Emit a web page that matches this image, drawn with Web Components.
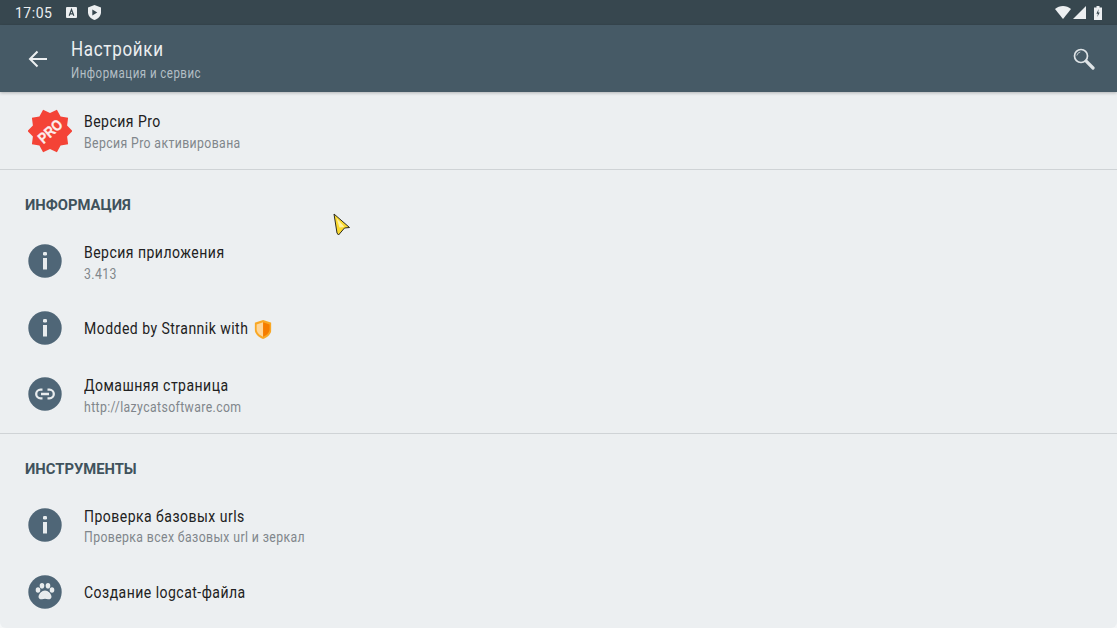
<!DOCTYPE html>
<html>
<head>
<meta charset="utf-8">
<style>
  html, body { margin: 0; height: 100%; background: #f5f7f8; overflow: hidden; }
  body { font-family: Roboto, "Liberation Sans", sans-serif; }
  app-screen { height: 628px; }
</style>
</head>
<body>
<app-screen>
  <status-bar></status-bar>
  <app-toolbar title="Настройки" subtitle="Информация и сервис"></app-toolbar>
  <pref-row label="Версия Pro" sub="Версия Pro активирована" icon="pro" first></pref-row>
  <pref-divider></pref-divider>
  <pref-header>ИНФОРМАЦИЯ</pref-header>
  <pref-row label="Версия приложения" sub="3.413" icon="info"></pref-row>
  <pref-row label="Modded by Strannik with" icon="info" shield></pref-row>
  <pref-row label="Домашняя страница" sub="http://lazycatsoftware.com" icon="link" last></pref-row>
  <pref-divider></pref-divider>
  <pref-header>ИНСТРУМЕНТЫ</pref-header>
  <pref-row label="Проверка базовых urls" sub="Проверка всех базовых url и зеркал" icon="info"></pref-row>
  <pref-row label="Создание logcat-файла" icon="paw"></pref-row>
  <mouse-pointer></mouse-pointer>
</app-screen>

<script>
// scalloped badge behind the PRO text
function badgePoints() {
  const pts = [];
  for (let i = 0; i < 20; i++) {
    const r = i % 2 ? 18 : 22.400;
    const a = (i * 18 - 108) * Math.PI / 180;
    pts.push((22 + r * Math.cos(a)).toFixed(1) + ',' + (22 + r * Math.sin(a)).toFixed(1));
  }
  return pts.join(' ');
}

const ICONS = {
  info: `<circle cx="17" cy="17" r="16.7" fill="#4f6677"/>
    <rect x="15" y="8" width="4" height="3.400" rx="1.200" fill="#e8ecee"/><rect x="15" y="14" width="4" height="11.500" fill="#e8ecee"/>`,
  link: `<circle cx="17" cy="17" r="16.7" fill="#4f6677"/>
    <path d="M14.500 12.700h-2a4.300 4.300 0 0 0 0 8.600h2M19.500 12.700h2a4.300 4.300 0 0 1 0 8.600h-2M13 17h8" fill="none" stroke="#e8ecee" stroke-width="2.300"/>`,
  paw: `<circle cx="17" cy="17" r="16.7" fill="#4f6677"/>
    <g fill="#e8ecee"><ellipse cx="10" cy="15" rx="2.300" ry="2.800"/><ellipse cx="14" cy="10.800" rx="2.300" ry="2.800"/><ellipse cx="20" cy="10.800" rx="2.300" ry="2.800"/><ellipse cx="24" cy="15" rx="2.300" ry="2.800"/>
    <path d="M17 15.500c-3 0-6.500 3.500-6.500 6.300 0 2.300 2.200 2.700 3.500 2.500 1-.2 2-.6 3-.6s2 .4 3 .6c1.300.2 3.500-.2 3.500-2.500 0-2.800-3.500-6.300-6.500-6.300z"/></g>`,
  pro: `<polygon fill="#f44336" points="${badgePoints()}"/>
    <g transform="rotate(-42 22 22) translate(22 27.400) scale(.84 1)"><text text-anchor="middle" font-family="'Liberation Sans', sans-serif" font-weight="700" font-size="15" stroke="#fdeeec" stroke-width=".3" fill="#fdeeec">PRO</text></g>`
};

class AppScreen extends HTMLElement {
  constructor() {
    super();
    this.attachShadow({ mode: 'open' });
    this.shadowRoot.innerHTML = `
      <style>
        :host { display: flex; flex-direction: column; position: relative; overflow: hidden; background: #eceff1; border-radius: 0 0 6px 6px; }
      </style>
      <slot></slot>`;
  }
}

class StatusBar extends HTMLElement {
  constructor() {
    super();
    this.attachShadow({ mode: 'open' });
    this.shadowRoot.innerHTML = `
      <style>
        :host { display: flex; align-items: center; height: 25px; flex: none; padding: 0 15px; background: #37474f; color: #eceff1; font-size: 14px; letter-spacing: .5px; }
        .left { display: flex; align-items: center; }
        .right { margin-left: auto; display: flex; align-items: center; }
        svg { display: block; }
      </style>
      <div class="left">
        <span>17:05</span>
        <svg style="margin-left:14px" width="11" height="11" viewBox="0 0 11 11"><rect width="11" height="11" rx="1" fill="#eceff1"/><path d="M3.200 8.800l2.300-6.300 2.300 6.300M4 6.800h3" stroke="#37474f" stroke-width="1.200" fill="none"/></svg>
        <svg style="margin-left:11px" width="13" height="15" viewBox="0 0 13 15"><path d="M6.500 0L13 2.400v4.800c0 3.500-2.700 6.500-6.500 7.800C2.700 13.700 0 10.700 0 7.200V2.400z" fill="#eceff1"/><path d="M4.300 4.500l5 3-5 3z" fill="#37474f"/></svg>
      </div>
      <div class="right">
        <svg width="16" height="13" viewBox="0 0 16 13"><path d="M0 3C4.500-1 11.500-1 16 3L8 13z" fill="#eceff1"/></svg>
        <svg style="margin-left:2px" width="13" height="13" viewBox="0 0 13 13"><path d="M13 0v13H0z" fill="#eceff1"/></svg>
        <svg style="margin-left:8px" width="8" height="14" viewBox="0 0 8 14"><path d="M2.500 0h3v1.500H8V14H0V1.500h2.500z" fill="#eceff1"/><path d="M4.600 3L2.400 7.800h1.500L3.300 11l2.400-4.600H4.200z" fill="#37474f"/></svg>
      </div>`;
  }
}

class AppToolbar extends HTMLElement {
  constructor() {
    super();
    this.attachShadow({ mode: 'open' });
    this.shadowRoot.innerHTML = `
      <style>
        :host { display: flex; align-items: center; flex: none; height: 67px; background: #465a66; color: #eceff1; box-shadow: 0 1px 3px rgba(0,0,0,.25); position: relative; z-index: 1; }
        .back { width: 71px; flex: none; display: flex; justify-content: center; padding-left: 5px; box-sizing: border-box; }
        .titles { flex: 1; display: flex; flex-direction: column; gap: 4px; }
        .title { font-size: 20px; line-height: 24px; letter-spacing: .8px; transform: scaleX(.85); transform-origin: left; }
        .sub { font-size: 14px; line-height: 16px; letter-spacing: .6px; color: #b4bfc5; transform: scaleX(.82); transform-origin: left; }
        .search { margin-right: 22px; }
        svg { display: block; }
      </style>
      <div class="back">
        <svg width="20" height="18" viewBox="0 0 20 18"><path d="M19 9H2M9.500 1.500L2 9l7.500 7.500" fill="none" stroke="#eceff1" stroke-width="2"/></svg>
      </div>
      <div class="titles"><div class="title"></div><div class="sub"></div></div>
      <svg class="search" width="22" height="22" viewBox="0 0 22 22"><circle cx="8" cy="8" r="6.500" fill="none" stroke="#dfe4e7" stroke-width="1.700"/><path d="M3.800 7.500a4.400 4.400 0 0 1 3.500-3.500" fill="none" stroke="#dfe4e7" stroke-width=".8"/><path d="M13.200 13.200L20 20" stroke="#dfe4e7" stroke-width="3.200" stroke-linecap="round"/></svg>`;
    this.shadowRoot.querySelector('.title').textContent = this.getAttribute('title');
    this.shadowRoot.querySelector('.sub').textContent = this.getAttribute('subtitle');
  }
}

class PrefRow extends HTMLElement {
  constructor() {
    super();
    this.attachShadow({ mode: 'open' });
    const sub = this.getAttribute('sub');
    const pro = this.getAttribute('icon') === 'pro';
    const shield = this.hasAttribute('shield') ? `<svg class="shield" width="19.400" height="19" viewBox="0 0 17 19" preserveAspectRatio="none"><path d="M8.500 0L17 2.800V9c0 4.500-3.500 8-8.500 10C3.500 17 0 13.500 0 9V2.800z" fill="#f9a825"/><path d="M8.500 2.300L2 4.400V9c0 3.300 2.500 6 6.500 7.700z" fill="#ffd699"/><path d="M8.500 2.300L15 4.400V9c0 3.300-2.500 6-6.500 7.700z" fill="#f57c00"/></svg>` : '';
    this.shadowRoot.innerHTML = `
      <style>
        :host { display: flex; align-items: center; flex: none; height: 66.600px; padding-left: 28px; color: #212121; }
        :host([first]) { height: 77px; }
        :host([last]) { margin-bottom: 5px; }
        .icon { width: 34px; height: 34px; flex: none; margin-right: 22px; }
        .icon.pro { width: 44px; height: 44px; margin-right: 12px; }
        .text { display: flex; flex-direction: column; gap: 2.500px; margin-top: 3px; }
        .text.two { margin-top: 4px; }
        .label { font-size: 16px; line-height: 18px; letter-spacing: .55px; display: flex; align-items: center; white-space: nowrap; transform: scaleX(.875); transform-origin: left; }
        .shield { margin-left: 7px; }
        .sub { font-size: 14px; line-height: 18px; letter-spacing: .45px; color: #80868b; white-space: nowrap; transform: scaleX(.875); transform-origin: left; }
      </style>
      <svg class="icon${pro ? ' pro' : ''}" viewBox="0 0 ${pro ? '44 44' : '34 34'}">${ICONS[this.getAttribute('icon')]}</svg>
      <div class="text${sub ? ' two' : ''}">
        <div class="label"><span>${this.getAttribute('label')}</span>${shield}</div>
        ${sub ? `<div class="sub">${sub}</div>` : ''}
      </div>`;
  }
}

class PrefDivider extends HTMLElement {
  constructor() {
    super();
    this.attachShadow({ mode: 'open' });
    this.shadowRoot.innerHTML = `<style>:host { display: block; flex: none; height: 1px; background: #cfd3d6; }</style>`;
  }
}

class PrefHeader extends HTMLElement {
  constructor() {
    super();
    this.attachShadow({ mode: 'open' });
    this.shadowRoot.innerHTML = `
      <style>
        :host { display: flex; align-items: center; flex: none; height: 58px; box-sizing: border-box; padding: 12px 0 0 25px; color: #40525c; }
        span { font-size: 15px; font-weight: 700; transform: scaleX(.985); transform-origin: left; }
      </style>
      <span><slot></slot></span>`;
  }
}

class MousePointer extends HTMLElement {
  constructor() {
    super();
    this.attachShadow({ mode: 'open' });
    this.shadowRoot.innerHTML = `
      <style>:host { position: absolute; left: 333px; top: 213px; width: 18px; height: 23px; } svg { display: block; }</style>
      <svg width="18" height="23" viewBox="0 0 18 23"><path d="M1 1l15.500 13.500-5 .5L5.500 22 4 20z" fill="#fbd92f" stroke="#2a2a20" stroke-width="1"/><path d="M3.500 5l8 9-5 .5z" fill="#fff2a0"/></svg>`;
  }
}

customElements.define('app-screen', AppScreen);
customElements.define('status-bar', StatusBar);
customElements.define('app-toolbar', AppToolbar);
customElements.define('pref-row', PrefRow);
customElements.define('pref-divider', PrefDivider);
customElements.define('pref-header', PrefHeader);
customElements.define('mouse-pointer', MousePointer);
</script>
</body>
</html>
